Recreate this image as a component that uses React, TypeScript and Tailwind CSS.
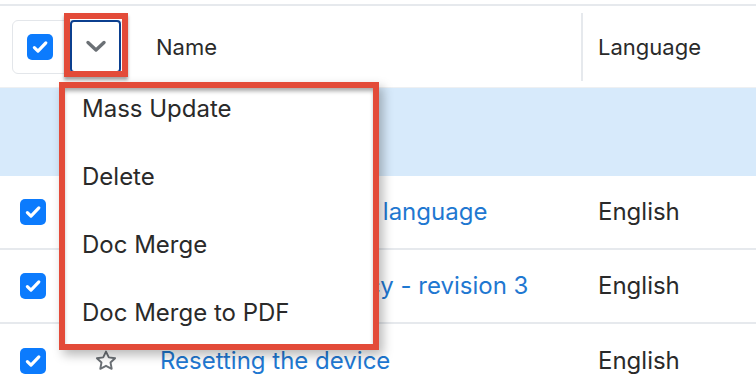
import React from 'react';

const Check = () => (
  <div className="w-[26px] h-[26px] rounded-[5px] bg-[#0c7bfd] flex items-center justify-center shrink-0">
    <svg width="18" height="18" viewBox="0 0 16 16" fill="none">
      <path d="M3 8.6l3.2 3.1L13.2 4.3" stroke="white" strokeWidth="2.8" strokeLinecap="round" strokeLinejoin="round" />
    </svg>
  </div>
);

const Star = () => (
  <svg width="24" height="24" viewBox="0 0 24 24" fill="none">
    <path
      d="M12 2.6l2.8 5.8 6.3.8-4.6 4.3 1.2 6.3L12 16.8l-5.7 3 1.2-6.3-4.6-4.3 6.3-.8z"
      stroke="#6b7075"
      strokeWidth="1.9"
      strokeLinejoin="round"
    />
  </svg>
);

const rows = [
  { title: 'Setting the primary language', star: false },
  { title: 'Product rental policy - revision 3', star: false },
  { title: 'Resetting the device', star: true },
];

const menuItems = ['Mass Update', 'Delete', 'Doc Merge', 'Doc Merge to PDF'];

export default function App() {
  return (
    <div className="relative w-[756px] h-[392px] overflow-hidden bg-white font-['Inter',sans-serif] text-[24px] text-[#2a2a2a]">
      <div className="h-[4px]" />
      <div className="h-[2px] bg-[#e6e9ed]" />

      {/* Header */}
      <div className="h-[82px] flex items-center border-b border-[#eef0f2] text-[22px]">
        <div className="ml-[12px] w-[112px] h-[54px] border-[1.5px] border-[#e3e6ea] rounded-[6px] flex items-center">
          <div className="w-[57px] flex pl-[14px]">
            <Check />
          </div>
          <div className="w-[51px] h-[53px] -mt-[1px] border-2 border-[#0b3f8f] rounded-[4px] flex items-center justify-center">
            <svg width="22" height="13" viewBox="0 0 22 13" fill="none">
              <path d="M3 2.5l8 7.5 8-7.5" stroke="#6b7075" strokeWidth="3.4" strokeLinecap="round" strokeLinejoin="round" />
            </svg>
          </div>
        </div>
        <div className="ml-[32px] w-[425px] pt-[2px]">Name</div>
        <div className="w-[2px] h-[68px] bg-[#e6e9ed]" />
        <div className="ml-[15px] pt-[2px]">Language</div>
      </div>

      {/* Selected-all banner row */}
      <div className="h-[88px] bg-[#d7eafb]" />

      {rows.map((r, i) => (
        <div key={i} className={`h-[74px] flex items-center ${i < 2 ? 'border-b-2 border-[#e6e9ed]' : ''}`}>
          <div className="ml-[20px] w-[74px]">
            <Check />
          </div>
          <div className="w-[66px] flex">
            {r.star && <Star />}
          </div>
          <div className="w-[438px] whitespace-nowrap text-[#1f78d1]">{r.title}</div>
          <div>English</div>
        </div>
      ))}

      {/* Red highlight around the dropdown toggle */}
      <div className="absolute left-[64px] top-[13px] w-[64px] h-[64px] border-[6px] border-[#e34b39] shadow-[0_3px_3px_rgba(0,0,0,0.35)]" />

      {/* Dropdown menu */}
      <div className="absolute left-[59px] top-[82px] w-[320px] h-[268px] bg-white border-[6px] border-[#e34b39] shadow-[4px_5px_10px_rgba(0,0,0,0.28)]">
        <div className="absolute inset-0 shadow-[inset_0_4px_4px_-1px_rgba(0,0,0,0.35)] pointer-events-none" />
        <div className="pt-[6px] pl-[17px]">
          {menuItems.map((m) => (
            <div key={m} className="leading-[30px] pb-[38px]">
              {m}
            </div>
          ))}
        </div>
      </div>
    </div>
  );
}
